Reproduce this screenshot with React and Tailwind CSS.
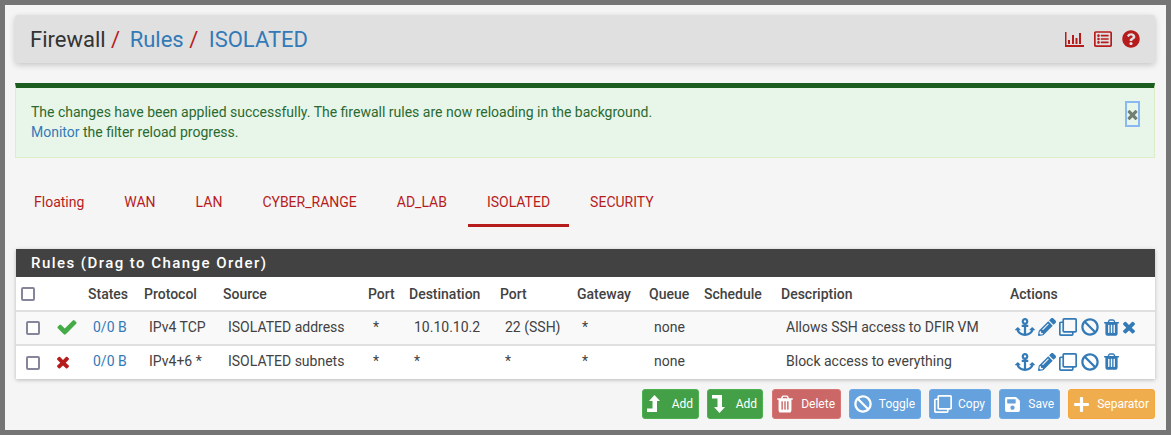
import React from 'react';
import { FaAnchor, FaPencilAlt, FaRegClone, FaBan, FaRegListAlt, FaQuestionCircle, FaSave, FaPlus } from 'react-icons/fa';

const tabs = ['Floating', 'WAN', 'LAN', 'CYBER_RANGE', 'AD_LAB', 'ISOLATED', 'SECURITY'];

const columns = [
  { label: '', width: 'w-[36px]' },
  { label: '', width: 'w-[31px]' },
  { label: 'States', width: 'w-[56px]' },
  { label: 'Protocol', width: 'w-[79px]' },
  { label: 'Source', width: 'w-[145px]' },
  { label: 'Port', width: 'w-[41px]' },
  { label: 'Destination', width: 'w-[91px]' },
  { label: 'Port', width: 'w-[77px]' },
  { label: 'Gateway', width: 'w-[72px]' },
  { label: 'Queue', width: 'w-[55px]' },
  { label: 'Schedule', width: 'w-[77px]' },
  { label: 'Description', width: 'w-[229px]' },
  { label: 'Actions', width: '' },
];

const rules = [
  {
    pass: true,
    cells: ['IPv4 TCP', 'ISOLATED address', '*', '10.10.10.2', '22 (SSH)', '*', 'none', '', 'Allows SSH access to DFIR VM'],
    remove: true,
  },
  {
    pass: false,
    cells: ['IPv4+6 *', 'ISOLATED subnets', '*', '*', '*', '*', 'none', '', 'Block access to everything'],
    remove: false,
  },
];

// Glyphs the icon packages only have in a later, different drawing
function TrashIcon({ className }) {
  return (
    <svg className={className} viewBox="0 0 1792 1792" fill="currentColor">
      <path d="M704 1376v-704q0-14-9-23t-23-9h-64q-14 0-23 9t-9 23v704q0 14 9 23t23 9h64q14 0 23-9t9-23zm256 0v-704q0-14-9-23t-23-9h-64q-14 0-23 9t-9 23v704q0 14 9 23t23 9h64q14 0 23-9t9-23zm256 0v-704q0-14-9-23t-23-9h-64q-14 0-23 9t-9 23v704q0 14 9 23t23 9h64q14 0 23-9t9-23zm-544-992h448l-48-117q-7-9-17-11h-317q-10 2-17 11zm928 32v64q0 14-9 23t-23 9h-96v948q0 83-47 143.5t-113 60.5h-832q-66 0-113-58.5t-47-141.5v-952h-96q-14 0-23-9t-9-23v-64q0-14 9-23t23-9h309l70-167q15-37 54-63t79-26h320q40 0 79 26t54 63l70 167h309q14 0 23 9t9 23z" />
    </svg>
  );
}

function TimesIcon({ className }) {
  return (
    <svg className={className} viewBox="0 0 1792 1792" fill="currentColor">
      <path d="M1490 1322q0 40-28 68l-136 136q-28 28-68 28t-68-28l-294-294-294 294q-28 28-68 28t-68-28l-136-136q-28-28-28-68t28-68l294-294-294-294q-28-28-28-68t28-68l136-136q28-28 68-28t68 28l294 294 294-294q28-28 68-28t68 28l136 136q28 28 28 68t-28 68l-294 294 294 294q28 28 28 68z" />
    </svg>
  );
}

function CheckIcon({ className }) {
  return (
    <svg className={className} viewBox="0 0 1792 1792" fill="currentColor">
      <path d="M1671 566q0 40-28 68l-724 724-136 136q-28 28-68 28t-68-28l-136-136-362-362q-28-28-28-68t28-68l136-136q28-28 68-28t68 28l294 295 656-657q28-28 68-28t68 28l136 136q28 28 28 68z" />
    </svg>
  );
}

function LevelUpIcon({ className }) {
  return (
    <svg className={className} viewBox="0 0 13 18" fill="currentColor">
      <path d="M7.5 0L13 6H10V17H0V13.5H5.5V6H2Z" />
    </svg>
  );
}

function LevelDownIcon({ className }) {
  return (
    <svg className={className} viewBox="0 0 13 18" fill="currentColor">
      <path d="M0 0H10V12H13L7.5 18L2 12H5.5V3.5H0Z" />
    </svg>
  );
}

function BarChartIcon() {
  return (
    <svg width="19" height="15" viewBox="0 0 19 15" fill="currentColor">
      <path d="M0 0h1.5v13H19v2H0z" />
      <path d="M3 8h2v4H3zM7 3h2v9H7zM10.5 6h2v6h-2zM14 1h2v11h-2z" />
    </svg>
  );
}

const buttons = [
  { label: 'Add', icon: LevelUpIcon, color: 'bg-[#43a047] border-[#4caf50]', width: 'w-[57px]', size: 'w-[13px] h-[18px]' },
  { label: 'Add', icon: LevelDownIcon, color: 'bg-[#43a047] border-[#4caf50]', width: 'w-[56px]', size: 'w-[13px] h-[18px]' },
  { label: 'Delete', icon: TrashIcon, color: 'ml-px bg-[#cb6767] border-[#d87676]', width: 'w-[69px]', size: '-ml-[2px] w-[20px] h-[20px]' },
  { label: 'Toggle', icon: FaBan, color: 'bg-[#64a1dd] border-[#6da9e4]', width: 'w-[72px]', size: 'w-[18px] h-[18px]' },
  { label: 'Copy', icon: FaRegClone, color: 'bg-[#64a1dd] border-[#6da9e4]', width: 'w-[62px]', size: 'w-[18px] h-[18px]' },
  { label: 'Save', icon: FaSave, color: 'bg-[#64a1dd] border-[#6da9e4]', width: 'w-[61px]', size: 'w-[17px] h-[17px]' },
  { label: 'Separator', icon: FaPlus, color: 'bg-[#f0ad4e] border-[#f4a63a]', width: 'w-[87px]', size: 'w-[17px] h-[17px]' },
];

function Checkbox() {
  return (
    <input
      type="checkbox"
      readOnly
      className="block appearance-none w-[14px] h-[14px] rounded-[2px] border-2 border-[#85859b] bg-white"
    />
  );
}

export default function App() {
  return (
    <div className="w-[1171px] h-[435px] overflow-hidden border-[5px] border-[#757575] bg-[#f5f5f5] pl-[10px] pr-[11px] pt-[10px] text-[14px] text-[#424242] font-['Roboto',sans-serif]">
      <header className="h-[48px] flex items-center justify-between px-[15px] bg-[#e0e0e0] rounded-[3px] shadow-[0_2px_6px_rgba(0,0,0,0.2)]">
        <h1 className="pt-[1px] text-[22px] font-normal leading-none text-[#333]">
          Firewall<span className="text-[#b71c1c]"> / </span>
          <a className="ml-[4px] text-[#337ab7]">Rules</a>
          <span className="text-[#b71c1c]"> / </span>
          <a className="ml-[5px] text-[#337ab7]">ISOLATED</a>
        </h1>
        <div className="flex items-center gap-[10px] text-[#b71c1c]">
          <BarChartIcon />
          <FaRegListAlt className="text-[18px]" />
          <FaQuestionCircle className="text-[18px]" />
        </div>
      </header>

      <div className="mt-[20px] h-[75px] flex justify-between border-x border-b border-[#dcedc8] border-t-[5px] border-t-[#1b5e20] bg-[#e8f5e9] pl-[15px] pr-[14px] pt-[14px] text-[#2a6a30] leading-[20px]">
        <p>
          The changes have been applied successfully. The firewall rules are now reloading in the background.
          <br />
          <a className="text-[#337ab7]">Monitor</a> the filter reload progress.
        </p>
        <button className="mt-[-1px] w-[15px] h-[26px] flex items-center justify-center border-2 border-[#8ab8f2] text-[#6f7f74]">
          <TimesIcon className="w-[15px] h-[15px] shrink-0" />
        </button>
      </div>

      <nav className="mt-[20px] flex gap-[2px] h-[49px]">
        {tabs.map((tab) => (
          <a
            key={tab}
            className={
              'px-[19px] pt-[14px] text-[#b71c1c] border-b-[3px] ' +
              (tab === 'ISOLATED' ? 'border-[#b71c1c]' : 'border-transparent')
            }
          >
            {tab}
          </a>
        ))}
      </nav>

      <section className="mt-[22px] ml-px bg-white shadow-[0_1px_4px_rgba(0,0,0,0.25)]">
        <h2 className="h-[28px] pl-[15px] bg-[#424242] text-white text-[15px] font-medium leading-[28px] tracking-[1.45px]">
          Rules (Drag to Change Order)
        </h2>
        <table className="w-full table-fixed border-collapse">
          <thead>
            <tr className="h-[34px] border-b-2 border-[#e0e0e0]">
              {columns.map((col, i) => (
                <th key={i} className={col.width + ' px-[5px] text-left font-medium text-[#424242] ' + (i === 0 ? '' : 'pt-[2px]')}>
                  {i === 0 ? <Checkbox /> : col.label}
                </th>
              ))}
            </tr>
          </thead>
          <tbody>
            {rules.map((rule, r) => (
              <tr key={r} className={'h-[34px] ' + (r === 0 ? 'bg-[#f9f9f9] border-b-2 border-[#e0e0e0]' : 'bg-white')}>
                <td className="pl-[10px]"><Checkbox /></td>
                <td className="pl-[5px] pb-[2px]">
                  {rule.pass
                    ? <CheckIcon className="-ml-[1px] w-[22px] h-[22px] text-[#43ac47]" />
                    : <TimesIcon className="-ml-[3px] w-[18px] h-[18px] text-[#b71c1c]" />}
                </td>
                <td className="pl-[10px] pb-[2px] text-[#337ab7]">0/0 B</td>
                {rule.cells.map((cell, i) => (
                  <td key={i} className="pl-[10px] pb-[2px] whitespace-nowrap">{cell}</td>
                ))}
                <td className="pl-[10px] pb-[2px]">
                  <div className="flex items-center gap-[3px] text-[#337ab7]">
                    <FaAnchor className="w-[20px] h-[20px]" />
                    <FaPencilAlt className="w-[18px] h-[18px]" />
                    <FaRegClone className="w-[18px] h-[18px]" />
                    <FaBan className="ml-px w-[18px] h-[18px]" />
                    <TrashIcon className="w-[19px] h-[19px]" />
                    {rule.remove && <TimesIcon className="-ml-[4px] w-[18px] h-[18px]" />}
                  </div>
                </td>
              </tr>
            ))}
          </tbody>
        </table>
      </section>

      <div className="mt-[10px] flex justify-end gap-[8px]">
        {buttons.map((btn, i) => {
          const Icon = btn.icon;
          return (
            <button
              key={i}
              className={btn.color + ' ' + btn.width + ' h-[30px] flex items-center justify-between pl-[4px] pr-[5px] border rounded-[3px] text-white text-[12px]'}
            >
              <Icon className={btn.size} />
              <span>{btn.label}</span>
            </button>
          );
        })}
      </div>
    </div>
  );
}
